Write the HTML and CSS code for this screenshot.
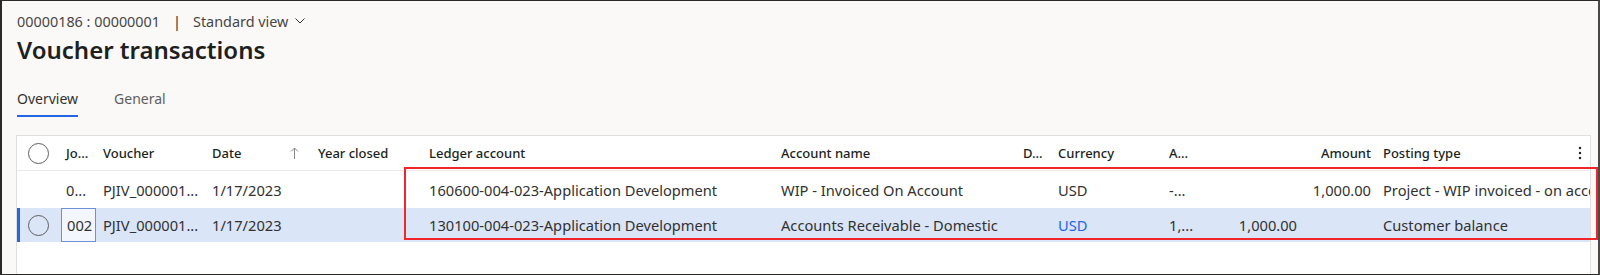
FILE: index.html
```html
<!DOCTYPE html>
<html lang="en">
<head>
    <meta charset="UTF-8">
    <title>Voucher transactions</title>
    <link rel="stylesheet" href="styles.css">
</head>
<body>

<div class="frame">
    <div class="crumbs">
        <span class="ids">00000186 : 00000001</span>
        <span class="sep">|</span>
        <span class="view">Standard view
            <svg width="10" height="6" viewBox="0 0 10 6"><polyline points="0.5,0.5 5,5 9.5,0.5" fill="none" stroke="#323130" stroke-width="1"/></svg>
        </span>
    </div>
    <h1>Voucher transactions</h1>

    <div class="tabs">
        <span class="tab active">Overview</span>
        <span class="tab">General</span>
    </div>

    <div class="card">
        <div class="row head">
            <div class="cell sel"><span class="circle"></span></div>
            <div class="cell">Jo...</div>
            <div class="cell">Voucher</div>
            <div class="cell date">Date
                <svg class="sort" width="9" height="12" viewBox="0 0 9 12"><path d="M4.5 12V1M1 4.5L4.5 1L8 4.5" fill="none" stroke="#8a8886" stroke-width="1"/></svg>
            </div>
            <div class="cell">Year closed</div>
            <div class="cell">Ledger account</div>
            <div class="cell">Account name</div>
            <div class="cell">D...</div>
            <div class="cell">Currency</div>
            <div class="cell">A...</div>
            <div class="cell num"></div>
            <div class="cell num">Amount</div>
            <div class="cell">Posting type</div>
            <div class="cell more">
                <svg width="4" height="14" viewBox="0 0 4 14"><circle cx="2" cy="2" r="1.2" fill="#201f1e"/><circle cx="2" cy="7" r="1.2" fill="#201f1e"/><circle cx="2" cy="12" r="1.2" fill="#201f1e"/></svg>
            </div>
        </div>

        <div class="row first">
            <div class="cell sel"></div>
            <div class="cell">0...</div>
            <div class="cell">PJIV_000001...</div>
            <div class="cell">1/17/2023</div>
            <div class="cell"></div>
            <div class="cell">160600-004-023-Application Development</div>
            <div class="cell">WIP - Invoiced On Account</div>
            <div class="cell"></div>
            <div class="cell">USD</div>
            <div class="cell">-...</div>
            <div class="cell num"></div>
            <div class="cell num">1,000.00</div>
            <div class="cell wide">Project - WIP invoiced - on account</div>
        </div>

        <div class="row selected">
            <div class="cell sel"><span class="circle"></span></div>
            <div class="cell focus">002</div>
            <div class="cell">PJIV_000001...</div>
            <div class="cell">1/17/2023</div>
            <div class="cell"></div>
            <div class="cell">130100-004-023-Application Development</div>
            <div class="cell">Accounts Receivable - Domestic</div>
            <div class="cell"></div>
            <div class="cell link">USD</div>
            <div class="cell">1,...</div>
            <div class="cell num">1,000.00</div>
            <div class="cell num"></div>
            <div class="cell wide">Customer balance</div>
        </div>
    </div>

    <div class="mark"></div>
</div>

</body>
</html>
```

FILE: styles.css
```css
body {
    margin: 0;
    font-family: "Segoe UI", "Noto Sans", sans-serif;
    font-size: 14px;
    color: #323130;
}
.frame {
    position: relative;
    box-sizing: border-box;
    height: 275px;
    padding: 10px 7px 0 14px;
    background-color: #faf9f8;
    border-top: 1px solid #2b2a29;
    border-bottom: 1px solid #2b2a29;
    border-left: 2px solid #2b2a29;
    border-right: 2px solid #4a4948;
    overflow: hidden;
}
.crumbs {
    display: flex;
    align-items: center;
    height: 20px;
    padding-left: 1px;
    font-size: 14.4px;
    color: #484644;
}
.crumbs .sep {
    margin: 0 12px 0 13px;
    color: #201f1e;
}
.crumbs .view svg {
    margin-left: 3px;
    vertical-align: 3px;
}
h1 {
    margin: 3px 0 0 1px;
    font-size: 24px;
    line-height: 32px;
    font-weight: 600;
    color: #201f1e;
}
.tabs {
    display: flex;
    margin: 23px 0 0 1px;
}
.tab {
    line-height: 20px;
    padding-bottom: 6px;
    margin-right: 36px;
    border-bottom: 2px solid transparent;
    color: #605e5c;
}
.tab.active {
    color: #323130;
    border-bottom-color: #2266e3;
}
.card {
    margin-top: 18px;
    height: 200px;
    background: white;
    border: 1px solid #e1dfdd;
    border-bottom: none;
}
.row {
    display: grid;
    grid-template-columns: 43px 37px 109px 106px 111px 352px 242px 35px 111px 42px 98px 74px 193px 20px;
    align-items: center;
    white-space: nowrap;
    font-size: 14.67px;
}
.row.head {
    height: 34px;
    border-bottom: 1px solid #edebe9;
    font-size: 13px;
    font-weight: 500;
    color: #201f1e;
}
.row.first {
    height: 37px;
}
.row.selected {
    height: 34px;
    background-color: #dae5f8;
}
.cell {
    padding: 0 6px;
    overflow: hidden;
}
.cell.num {
    text-align: right;
}
.cell.sel {
    display: flex;
    justify-content: center;
    align-items: center;
    align-self: stretch;
    padding: 0;
}
.row.selected .cell.sel {
    box-shadow: inset 3px 0 0 #2266e3;
}
.circle {
    width: 19px;
    height: 19px;
    border: 1px solid #605e5c;
    border-radius: 50%;
}
.cell.date {
    display: flex;
    justify-content: space-between;
    align-items: center;
    padding-right: 13px;
}
.cell.more {
    display: flex;
    justify-content: center;
    padding: 0;
}
.cell.wide {
    grid-column: span 2;
}
.cell.focus {
    align-self: stretch;
    display: flex;
    align-items: center;
    margin-left: 1px;
    margin-right: 1px;
    padding-left: 5px;
    background: #f3f6fc;
    border: 1px solid #6f8fd6;
}
.cell.link {
    color: #2266e3;
}
.mark {
    position: absolute;
    left: 402px;
    top: 166px;
    width: 1190px;
    height: 69px;
    border: 2px solid #f0262b;
}
```
